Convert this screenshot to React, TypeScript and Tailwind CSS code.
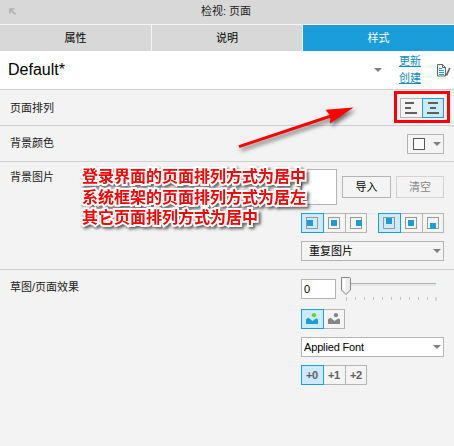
import type { ReactNode } from "react";

function Caret() {
  return (
    <svg width="8" height="4" viewBox="0 0 8 4" className="block shrink-0">
      <path d="M0 0H8L4 4Z" fill="#808080" />
    </svg>
  );
}

function Segments({ items, selected }: { items: ReactNode[]; selected: number }) {
  return (
    <div className="flex h-5">
      {items.map((item, i) => (
        <div
          key={i}
          className={
            i === selected
              ? "flex h-5 w-[23px] items-center border border-[#1b9dd9] bg-[#cceafa] pl-1"
              : i === items.length - 1 && i > 1
                ? "flex h-5 w-[22px] items-center border border-[#b4b4b4] bg-[#f4f4f4] pl-1"
                : i === items.length - 1
                  ? "flex h-5 w-[21px] items-center border border-l-0 border-[#b4b4b4] bg-[#f4f4f4] pl-1"
                  : "flex h-5 w-[21px] items-center border-y border-[#b4b4b4] bg-[#f4f4f4] pl-1"
          }
        >
          {item}
        </div>
      ))}
    </div>
  );
}

function Anchor({ x, y }: { x: number; y: number }) {
  return (
    <svg width="12" height="12" viewBox="0 0 12 12" className="block">
      <rect x="0.5" y="0.5" width="11" height="11" fill="none" stroke="#989898" />
      <rect x={x} y={y} width="6" height="6" fill="#1b9dd9" />
    </svg>
  );
}

function Lines({ centered }: { centered: boolean }) {
  return (
    <svg width="12" height="12" viewBox="0 0 12 12" className="block">
      <g fill="#606060">
        <rect x={centered ? 1 : 0} y="0" width={centered ? 10 : 9} height="2" />
        <rect x={centered ? 3 : 0} y="5" width="6" height="2" />
        <rect x="0" y="10" width="12" height="2" />
      </g>
    </svg>
  );
}

function Picture({ fill, sun }: { fill: string; sun: string }) {
  return (
    <svg width="12" height="12" viewBox="0 0 12 12" className="block">
      <circle cx="8" cy="2.2" r="2.1" fill={sun} />
      <path d="M0 6.2L2.5 4.8L6.5 8L9 6.3L10.5 5.6L12 6.5V11H0Z" fill={fill} />
    </svg>
  );
}

function Arrow() {
  return (
    <svg
      width="130"
      height="60"
      viewBox="0 0 130 60"
      className="absolute left-[235px] top-[98px] [filter:drop-shadow(2px_3px_2px_rgb(0_0_0/0.55))]"
    >
      <path d="M4 48.7L96 18" stroke="#f00" strokeWidth="3" />
      <path d="M118.5 9.6L90.5 11.7L95.5 18L95 25.5Z" fill="#f00" />
    </svg>
  );
}

export default function App() {
  return (
    <div className="relative h-[446px] w-[454px] overflow-hidden bg-[#f3f3f3] font-['Liberation_Sans','Noto_Sans_CJK_SC',sans-serif] text-[11px] leading-4 text-[#202020]">
      <header className="flex h-6 items-center bg-[#d8d8d8] pt-px">
        <svg width="8" height="8" viewBox="0 0 8 8" className="-mt-[3px] ml-2 block">
          <path d="M2 6.5V2H6.5M2.5 2.5L7.5 7.5" fill="none" stroke="#b2b2b2" strokeWidth="1.7" />
        </svg>
        <span className="-mt-1 ml-[185px] whitespace-pre">检视: 页面</span>
      </header>
      <nav className="mt-px flex h-[26px] gap-px bg-[#f3f3f3] text-black">
        <div className="flex w-[151px] items-center justify-center bg-[#d8d8d8]">属性</div>
        <div className="flex w-[150px] items-center justify-center bg-[#d8d8d8]">说明</div>
        <div className="flex flex-1 items-center justify-center bg-[#1b9dd9] text-white">样式</div>
      </nav>
      <section className="flex h-[39px] items-center border-b border-[#cfcfcf] bg-white">
        <span className="ml-2 w-[366px] text-[16px] leading-5 text-black">Default*</span>
        <Caret />
        <div className="ml-[17px] flex w-[22px] flex-col text-[11px] leading-[17px] text-[#0f8cbe] underline">
          <span>更新</span>
          <span>创建</span>
        </div>
        <svg width="14" height="13" viewBox="0 0 14 13" className="ml-4 block">
          <path d="M5.5 .5H.5V12H8.5V3.5L5.5 .5V3.5H8.5" fill="none" stroke="#666" />
          <path d="M2 4.5H5M2 6.5H7M2 8.5H7M2 10.5H7" stroke="#1b9dd9" />
          <path d="M12.8 4L9.4 11.5" stroke="#666" strokeWidth="1.8" />
        </svg>
      </section>

      <section className="flex h-9 items-center justify-between border-b border-[#cfcfcf] px-2.5">
        <span>页面排列</span>
        <div className="flex h-5">
          <div className="flex w-[22px] items-center border border-r-0 border-[#b4b4b4] bg-[#f4f4f4] pl-1">
            <Lines centered={false} />
          </div>
          <div className="flex w-[22px] items-center border border-[#1b9dd9] bg-[#cceafa] pl-1">
            <Lines centered />
          </div>
        </div>
      </section>

      <section className="flex h-9 items-center justify-between border-b border-[#cfcfcf] px-2.5">
        <span className="-mt-px">背景颜色</span>
        <div className="flex h-5 w-[37px] items-center justify-between border border-[#b4b4b4] bg-[#f4f4f4] pl-[5px] pr-0.5">
          <div className="h-3 w-3 border border-[#555] bg-[#fafafa]" />
          <Caret />
        </div>
      </section>

      <section className="flex h-[108px] justify-between border-b border-[#cfcfcf] px-2.5 pt-[7px]">
        <span>背景图片</span>
        <div className="flex w-[143px] flex-col gap-2">
          <div className="flex h-9 items-center">
            <div className="h-9 w-9 border border-[#b4b4b4] bg-white" />
            <div className="ml-[5px] flex h-[22px] w-[49px] items-center justify-center border border-[#b4b4b4] bg-[#f4f4f4] text-black">
              导入
            </div>
            <div className="ml-[5px] flex h-[22px] w-12 items-center justify-center border border-[#d3d3d3] text-[#888]">
              清空
            </div>
          </div>
          <div className="flex justify-between">
            <Segments
              selected={0}
              items={[<Anchor x={1} y={3} />, <Anchor x={3} y={3} />, <Anchor x={6} y={3} />]}
            />
            <Segments
              selected={0}
              items={[<Anchor x={3} y={1} />, <Anchor x={3} y={3} />, <Anchor x={3} y={6} />]}
            />
          </div>
          <div className="flex h-5 items-center justify-between border border-[#b4b4b4] bg-[#f4f4f4] pl-[7px] pr-0.5 text-black">
            <span>重复图片</span>
            <Caret />
          </div>
        </div>
      </section>

      <section className="flex justify-between px-2.5 pt-[7px]">
        <span className="pt-0.5">草图/页面效果</span>
        <div className="flex w-[143px] flex-col gap-2">
          <div className="flex h-6 items-start">
            <div className="mt-0.5 flex h-5 w-[35px] items-center border border-[#b4b4b4] bg-white pl-0.5 text-[11px] text-black">
              0
            </div>
            <svg width="98" height="24" viewBox="0 0 98 24" className="ml-1 block">
              <rect x="10" y="6" width="86" height="1" fill="#aeb3b3" />
              <rect x="10" y="7" width="86" height="2" fill="#e4e8e8" />
              <path
                d="M6.5 20v4M15.5 20v3M24.5 20v3M33.5 20v3M42.5 20v3M51.5 20v3M60.5 20v3M69.5 20v3M78.5 20v3M87.5 20v3"
                stroke="#c2c6c6"
              />
              <path d="M96 20v4" stroke="#d8dada" strokeWidth="2" />
              <path d="M1.5 .5H9.5Q10.5 .5 10.5 1.5V13L6 17.5L1.5 13Z" fill="#ececec" stroke="#858585" />
              <path d="M2.5 1.5H5.5V15.5L2.5 12.5Z" fill="#fff" />
            </svg>
          </div>
          <Segments
            selected={0}
            items={[
              <Picture fill="#1b9dd9" sun="#5cd63c" />,
              <Picture fill="#858585" sun="#858585" />,
            ]}
          />
          <div className="flex h-5 items-center justify-between border border-[#b4b4b4] bg-white px-0.5 text-[11px] text-black">
            <span className="tracking-[-0.15px]">Applied Font</span>
            <Caret />
          </div>
          <div className="font-bold tracking-[-0.3px] text-[#606060]">
            <Segments selected={0} items={["+0", "+1", "+2"]} />
          </div>
        </div>
      </section>

      <div className="absolute left-[394px] top-[91px] h-8 w-14 border-[3px] border-[#f00]" />
      <Arrow />
      <div className="absolute left-[82px] top-[167px] whitespace-nowrap text-[16px] font-bold leading-[20.5px] text-[#f00] [-webkit-text-stroke:4px_white] [filter:drop-shadow(2px_2px_1.5px_rgb(0_0_0/0.6))] [paint-order:stroke_fill]">
        <div>登录界面的页面排列方式为居中</div>
        <div>系统框架的页面排列方式为居左</div>
        <div>其它页面排列方式为居中</div>
      </div>
    </div>
  );
}
